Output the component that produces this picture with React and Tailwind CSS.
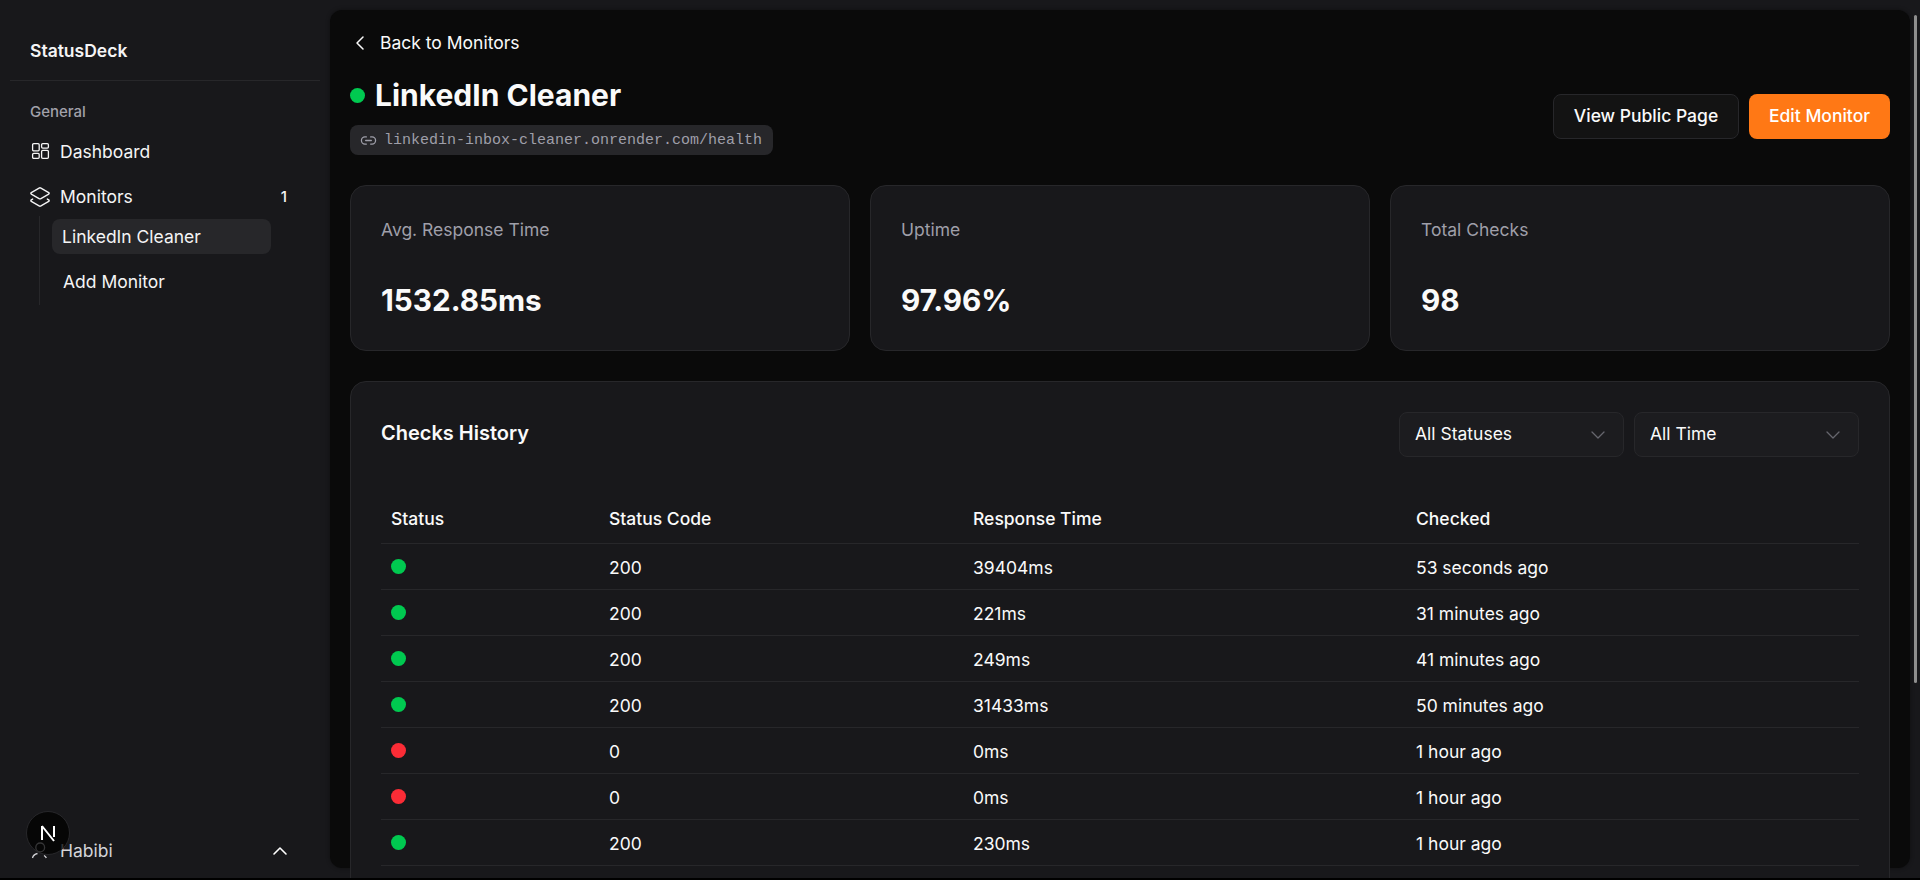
import { ChevronLeft, ChevronUp, ChevronDown, Link2, Layers2 } from 'lucide-react';

const checks = [
  { up: true, code: 200, time: '39404ms', ago: '53 seconds ago' },
  { up: true, code: 200, time: '221ms', ago: '31 minutes ago' },
  { up: true, code: 200, time: '249ms', ago: '41 minutes ago' },
  { up: true, code: 200, time: '31433ms', ago: '50 minutes ago' },
  { up: false, code: 0, time: '0ms', ago: '1 hour ago' },
  { up: false, code: 0, time: '0ms', ago: '1 hour ago' },
  { up: true, code: 200, time: '230ms', ago: '1 hour ago' },
];

const stats = [
  { label: 'Avg. Response Time', value: '1532.85ms' },
  { label: 'Uptime', value: '97.96%' },
  { label: 'Total Checks', value: '98' },
];

const DashboardIcon = () => (
  <svg className="w-5 h-5" viewBox="0 0 20 20" fill="none" stroke="currentColor" strokeWidth="1.3">
    <rect x="2.6" y="1.6" width="6.6" height="7.2" rx="1.1" />
    <rect x="11.6" y="1.6" width="6.8" height="4.6" rx="1.1" />
    <rect x="2.6" y="11.4" width="6.6" height="5" rx="1.1" />
    <rect x="11.6" y="8.4" width="6.8" height="8" rx="1.1" />
  </svg>
);

// the lower part of this icon sits under the dev badge in the screenshot
const UserIcon = () => (
  <svg className="w-[18px] h-[18px]" viewBox="0 0 18 18" fill="none" stroke="currentColor" strokeWidth="1.3">
    <circle cx="10.2" cy="5.4" r="4.4" />
    <path d="M2.5 16C3 13.5 5 12 7.5 11.5" />
    <path d="M14 13.5C15 14 16 15 16.3 16" />
  </svg>
);

const Sidebar = () => (
  <aside className="w-[330px] shrink-0 h-full relative flex flex-col text-[#f4f4f5]">
    <div className="h-[81px] mx-[10px] px-5 border-b border-[#27272a] flex items-center pt-[21px]">
      <span className="text-[17.5px] font-semibold leading-6">StatusDeck</span>
    </div>
    <div className="px-[30px] pt-[21px]">
      <div className="text-[15px] font-medium text-[#a1a1aa] leading-5">General</div>
      <div className="flex items-center gap-[10px] mt-[18px] h-6 text-[17.5px]">
        <DashboardIcon />
        <span>Dashboard</span>
      </div>
      <div className="flex items-center gap-[9px] mt-[21px] h-6 text-[17.5px] pr-[13px]">
        <Layers2 className="w-[22px] h-[22px] -ml-[1px]" strokeWidth={1.5} />
        <span className="flex-1">Monitors</span>
        <span className="text-[15px] font-medium">1</span>
      </div>
    </div>
    <div className="ml-[39px] mt-[7px] w-[232px] border-l border-[#27272a] pl-[12px] pt-[3px] h-[89px] flex flex-col">
      <div className="h-[35px] shrink-0 rounded-lg bg-[#27272a] px-[10px] pt-[2px] flex items-center text-[17.5px]">LinkedIn Cleaner</div>
      <div className="h-[35px] shrink-0 mt-[10px] px-[11px] pt-[2px] flex items-center text-[17.5px]">Add Monitor</div>
    </div>
    <div className="mt-auto mb-[15px] pl-[30px] pr-[38px] flex items-center gap-3 h-6 text-[17.5px] text-[#d4d4d8]">
      <UserIcon />
      <span className="flex-1">Habibi</span>
      <ChevronUp className="w-6 h-6 text-white" strokeWidth={1.6} />
    </div>
    <div className="absolute left-[26px] top-[811px] w-[44px] h-[44px] rounded-full bg-black/75 border border-[#27272a] flex items-center justify-center">
      <svg className="w-[18px] h-[18px]" viewBox="0 0 18 18" fill="none">
        <path d="M3 2v14M3 2l12 15M15 2v11" stroke="#fff" strokeWidth="2" />
      </svg>
    </div>
  </aside>
);

const Dot = ({ up }) => (
  <span className={`block w-[15px] h-[15px] rounded-full ${up ? 'bg-[#00c950]' : 'bg-[#fb2c36]'}`} />
);

export default function App() {
  return (
    <div className="w-full h-[880px] bg-black overflow-hidden">
      <div className="w-full h-[878px] bg-[#18181b] flex overflow-hidden relative font-['Inter',sans-serif] text-[#fafafa]">
        <Sidebar />
        <main className="flex-1 mt-[10px] mr-[10px] h-[858px] rounded-xl bg-[#0a0a0a] px-5 pt-[18px] shadow-[0_0_4px_rgba(0,0,0,0.4)]">
          <div className="flex items-center h-[30px] text-[17.5px] gap-2">
            <ChevronLeft className="w-6 h-6 -ml-[2px]" strokeWidth={1.5} />
            <span>Back to Monitors</span>
          </div>
          <div className="flex justify-between items-start mt-[19px]">
            <div>
              <div className="flex items-center gap-[10px]">
                <span className="w-[15px] h-[15px] rounded-full bg-[#00c950]" />
                <h1 className="text-[30px] leading-9 font-bold">LinkedIn Cleaner</h1>
              </div>
              <div className="mt-[12px] h-[30px] w-[423px] rounded-lg bg-[#27272a] flex items-center pl-[10px] gap-[7px] text-[#9f9fa9]">
                <Link2 className="w-[17px] h-[17px] shrink-0" strokeWidth={1.8} />
                <span className="font-['Liberation_Mono',monospace] text-[15px] whitespace-nowrap pt-[3px]">linkedin-inbox-cleaner.onrender.com/health</span>
              </div>
            </div>
            <div className="flex gap-[10px] mt-[17px]">
              <button className="h-[45px] w-[186px] rounded-lg bg-[#131313] border border-[#27272a] text-[17.5px] font-medium">View Public Page</button>
              <button className="h-[45px] w-[141px] rounded-lg bg-[#ff7815] text-[17.5px] font-medium text-white">Edit Monitor</button>
            </div>
          </div>
          <div className="grid grid-cols-3 gap-5 mt-[30px]">
            {stats.map((s) => (
              <div key={s.label} className="h-[166px] rounded-2xl bg-[#18181b] border border-[#27272a] px-[30px] pt-[32px]">
                <div className="text-[17.5px] leading-6 text-[#9f9fa9]">{s.label}</div>
                <div className="text-[29.7px] leading-9 font-bold mt-[40px]">{s.value}</div>
              </div>
            ))}
          </div>
          <div className="mt-[30px] rounded-2xl bg-[#18181b] border border-[#27272a] px-[30px] pt-[30px] h-[600px]">
            <div className="flex items-center justify-between h-[45px]">
              <h2 className="text-xl font-semibold pb-[3px]">Checks History</h2>
              <div className="flex gap-[10px]">
                {['All Statuses', 'All Time'].map((label) => (
                  <div key={label} className="w-[225px] h-[45px] rounded-lg bg-[#1c1c1f] border border-[#27272a] pl-[15px] pr-[13px] flex items-center justify-between text-[17.5px]">
                    <span>{label}</span>
                    <ChevronDown className="w-6 h-6 text-[#66666e]" strokeWidth={1.3} />
                  </div>
                ))}
              </div>
            </div>
            <table className="w-full mt-[40px] text-[17.5px] border-collapse table-fixed">
              <colgroup>
                <col className="w-[218px]" />
                <col className="w-[364px]" />
                <col className="w-[443px]" />
                <col />
              </colgroup>
              <thead>
                <tr className="border-b border-[#27272a] h-[46px]">
                  <th className="text-left font-medium px-[10px] pb-[2px]">Status</th>
                  <th className="text-left font-medium px-[10px] pb-[2px]">Status Code</th>
                  <th className="text-left font-medium px-[10px] pb-[2px]">Response Time</th>
                  <th className="text-left font-medium px-[10px] pb-[2px]">Checked</th>
                </tr>
              </thead>
              <tbody>
                {checks.map((c, i) => (
                  <tr key={i} className="border-b border-[#27272a] h-[46px]">
                    <td className="px-[10px]"><Dot up={c.up} /></td>
                    <td className="px-[10px] pt-[4px]">{c.code}</td>
                    <td className="px-[10px] pt-[4px]">{c.time}</td>
                    <td className="px-[10px] pt-[4px]">{c.ago}</td>
                  </tr>
                ))}
              </tbody>
            </table>
          </div>
        </main>
        <div className="absolute right-[3px] top-[15px] w-[3px] h-[668px] rounded-full bg-[#8e8e8e]" />
      </div>
    </div>
  );
}
